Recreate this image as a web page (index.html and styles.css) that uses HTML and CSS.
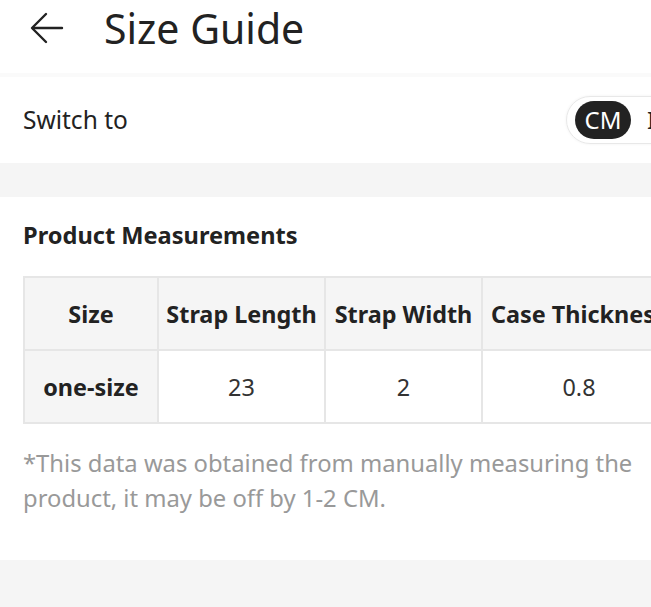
FILE: index.html
```html
<!DOCTYPE html>
<html>
<head>
<meta charset="utf-8">
<link rel="stylesheet" href="styles.css">
</head>
<body>
<div class="page">
  <header class="topbar">
    <svg class="back" width="34" height="32" viewBox="0 0 34 32" fill="none" stroke="#222" stroke-width="2.4" stroke-linecap="round" stroke-linejoin="round">
      <path d="M32 16H3"/>
      <path d="M16 2L2 16L16 30"/>
    </svg>
    <h1 class="title">Size Guide</h1>
  </header>
  <div class="divider"></div>
  <section class="switch-row">
    <span class="switch-label">Switch to</span>
    <div class="toggle">
      <span class="opt active">CM</span>
      <span class="opt">IN</span>
    </div>
  </section>
  <div class="gap"></div>
  <section class="card">
    <h2 class="card-title">Product Measurements</h2>
    <div class="table-wrap">
      <table class="sizes">
        <colgroup>
          <col class="c1"><col class="c2"><col class="c3"><col class="c4">
        </colgroup>
        <tr class="head">
          <th>Size</th>
          <th>Strap Length</th>
          <th>Strap Width</th>
          <th>Case Thickness</th>
        </tr>
        <tr>
          <th>one-size</th>
          <td>23</td>
          <td>2</td>
          <td>0.8</td>
        </tr>
      </table>
    </div>
    <p class="note">*This data was obtained from manually measuring the product, it may be off by 1-2 CM.</p>
  </section>
  <div class="bottom"></div>
</div>
</body>
</html>
```

FILE: styles.css
```css
* { box-sizing: border-box; }
html, body { margin: 0; padding: 0; background: #fff; }
body { font-family: "Noto Sans", "Open Sans", sans-serif; color: #222; overflow: hidden; width: 651px; height: 607px; }
.page { display: flex; flex-direction: column; height: 607px; }
.topbar { height: 73px; display: flex; align-items: center; padding: 0 0 17px 30px; }
.back { flex-shrink: 0; }
.title { margin: 0 0 0 40px; font-size: 41px; font-weight: 400; color: #222; line-height: 1; }
.divider { height: 4px; background: #fafafa; }
.switch-row { height: 86px; display: flex; align-items: center; padding-left: 23px; overflow: hidden; }
.switch-label { flex: 0 0 543px; font-size: 24.5px; color: #222; padding-bottom: 2px; }
.toggle { flex-shrink: 0; display: flex; align-items: center; border: 1px solid #e8e8e8; border-radius: 26px; padding: 0 8px; height: 48px; box-shadow: 0 0 3px rgba(0,0,0,0.06); }
.opt { font-size: 24px; padding: 0 10px; height: 38px; line-height: 38px; color: #222; margin-left: 6px; }
.opt.active { background: #222; color: #fff; border-radius: 19px; margin-left: 0; width: 56px; text-align: center; padding: 0; }
.gap { height: 34px; background: #f5f5f5; }
.card { padding: 18px 0 0 23px; background: #fff; height: 363px; }
.card-title { margin: 0; font-size: 23.6px; font-weight: 700; color: #222; line-height: 40px; }
.table-wrap { margin-top: 21px; overflow: hidden; }
.sizes { border-collapse: collapse; font-size: 23.4px; table-layout: fixed; width: 652px; }
.sizes th, .sizes td { border: 2px solid #e6e6e6; text-align: center; height: 73px; padding: 0; white-space: nowrap; overflow: hidden; }
.sizes th { font-weight: 700; color: #222; background: #f5f5f5; }
.sizes td { font-weight: 400; color: #333; background: #fff; }
.c1 { width: 134px; }
.c2 { width: 167px; }
.c3 { width: 157px; }
.c4 { width: 194px; }
.sizes .head th:last-child { text-align: left; padding-left: 8px; }
.note { margin: 22px 6px 0 0; font-size: 23.8px; line-height: 35px; color: #999; }
.bottom { flex: 1; background: #f5f5f5; }
```
